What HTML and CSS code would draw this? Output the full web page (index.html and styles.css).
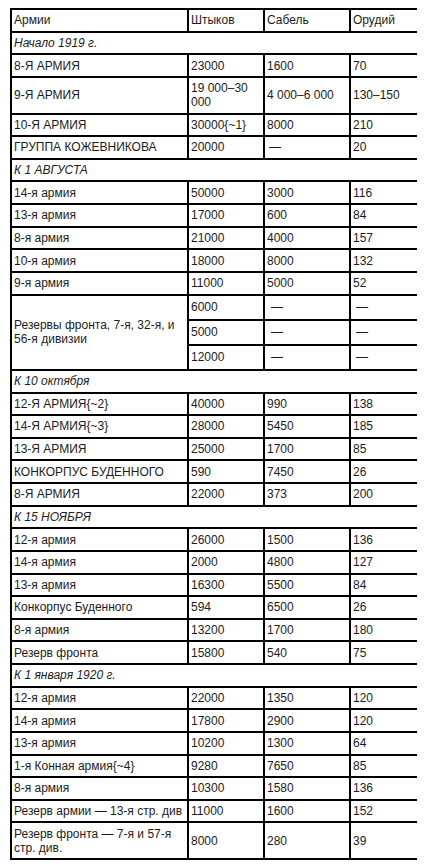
FILE: index.html
```html
<!DOCTYPE html>
<html lang="ru">
<head>
<meta charset="utf-8">
<title>Армии</title>
<link rel="stylesheet" href="styles.css">
</head>
<body>
<table class="forces">
  <colgroup>
    <col class="c1"><col class="c2"><col class="c3"><col class="c4">
  </colgroup>
  <tbody>
    <tr><td>Армии</td><td>Штыков</td><td>Сабель</td><td>Орудий</td></tr>
    <tr><td class="sec" colspan="4">Начало 1919 г.</td></tr>
    <tr><td>8-Я АРМИЯ</td><td>23000</td><td>1600</td><td>70</td></tr>
    <tr><td>9-Я АРМИЯ</td><td>19 000–30 000</td><td>4 000–6 000</td><td>130–150</td></tr>
    <tr><td>10-Я АРМИЯ</td><td>30000{~1}</td><td>8000</td><td>210</td></tr>
    <tr><td>ГРУППА КОЖЕВНИКОВА</td><td>20000</td><td class="dash">—</td><td>20</td></tr>
    <tr><td class="sec" colspan="4">К 1 АВГУСТА</td></tr>
    <tr><td>14-я армия</td><td>50000</td><td>3000</td><td>116</td></tr>
    <tr><td>13-я армия</td><td>17000</td><td>600</td><td>84</td></tr>
    <tr><td>8-я армия</td><td>21000</td><td>4000</td><td>157</td></tr>
    <tr><td>10-я армия</td><td>18000</td><td>8000</td><td>132</td></tr>
    <tr><td>9-я армия</td><td>11000</td><td>5000</td><td>52</td></tr>
    <tr class="tall"><td rowspan="3">Резервы фронта, 7-я, 32-я, и 56-я дивизии</td><td>6000</td><td class="dash2">—</td><td class="dash3">—</td></tr>
    <tr class="tall"><td>5000</td><td class="dash2">—</td><td class="dash3">—</td></tr>
    <tr class="tall"><td>12000</td><td class="dash2">—</td><td class="dash3">—</td></tr>
    <tr><td class="sec" colspan="4">К 10 октября</td></tr>
    <tr><td>12-Я АРМИЯ{~2}</td><td>40000</td><td>990</td><td>138</td></tr>
    <tr><td>14-Я АРМИЯ{~3}</td><td>28000</td><td>5450</td><td>185</td></tr>
    <tr><td>13-Я АРМИЯ</td><td>25000</td><td>1700</td><td>85</td></tr>
    <tr><td>КОНКОРПУС БУДЕННОГО</td><td>590</td><td>7450</td><td>26</td></tr>
    <tr><td>8-Я АРМИЯ</td><td>22000</td><td>373</td><td>200</td></tr>
    <tr><td class="sec" colspan="4">К 15 НОЯБРЯ</td></tr>
    <tr><td>12-я армия</td><td>26000</td><td>1500</td><td>136</td></tr>
    <tr><td>14-я армия</td><td>2000</td><td>4800</td><td>127</td></tr>
    <tr><td>13-я армия</td><td>16300</td><td>5500</td><td>84</td></tr>
    <tr><td>Конкорпус Буденного</td><td>594</td><td>6500</td><td>26</td></tr>
    <tr><td>8-я армия</td><td>13200</td><td>1700</td><td>180</td></tr>
    <tr><td>Резерв фронта</td><td>15800</td><td>540</td><td>75</td></tr>
    <tr><td class="sec" colspan="4">К 1 января 1920 г.</td></tr>
    <tr><td>12-я армия</td><td>22000</td><td>1350</td><td>120</td></tr>
    <tr><td>14-я армия</td><td>17800</td><td>2900</td><td>120</td></tr>
    <tr><td>13-я армия</td><td>10200</td><td>1300</td><td>64</td></tr>
    <tr><td>1-я Конная армия{~4}</td><td>9280</td><td>7650</td><td>85</td></tr>
    <tr><td>8-я армия</td><td>10300</td><td>1580</td><td>136</td></tr>
    <tr><td>Резерв армии — 13-я стр. див</td><td>11000</td><td>1600</td><td>152</td></tr>
    <tr><td>Резерв фронта — 7-я и 57-я стр. див.</td><td>8000</td><td>280</td><td>39</td></tr>
  </tbody>
</table>
</body>
</html>
```

FILE: styles.css
```css
html, body {
  background: #ffffff;
}
body {
  margin: 8px 9px 8px 10px;
  font-family: "Liberation Sans", Arial, sans-serif;
  font-size: 12px;
  color: #1c1c1c;
}
.forces {
  border-collapse: separate;
  border-spacing: 0;
  border: 1px solid #000;
  table-layout: fixed;
  width: 407px;
}
.c1 { width: 177px; }
.c2 { width: 76px; }
.c3 { width: 86px; }
.c4 { width: 68px; }
.forces td {
  border: 1px solid #000;
  padding: 3.3125px 2px 3.3125px 2px;
  line-height: 14px;
  vertical-align: middle;
  text-align: left;
}
.forces td.sec {
  font-style: italic;
}
.forces tr.tall td {
  height: 16.5px;
}
.forces td.dash {
  padding-left: 4px;
}
.forces td.dash2 {
  padding-left: 6px;
}
.forces td.dash3 {
  padding-left: 5px;
}
```
